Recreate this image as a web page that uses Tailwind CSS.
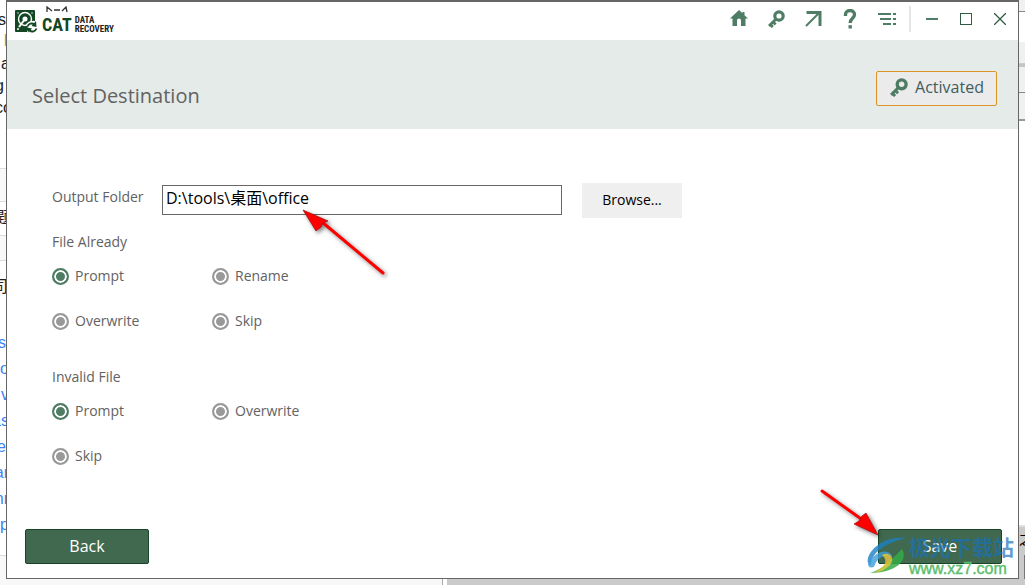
<!DOCTYPE html>
<html lang="en">
<head>
<meta charset="utf-8">
<meta name="viewport" content="width=device-width, initial-scale=1">
<title>CAT Data Recovery</title>
<script src="https://cdn.jsdelivr.net/npm/@tailwindcss/browser@4"></script>
</head>
<body class="relative flex h-screen flex-col overflow-hidden bg-white font-['Open_Sans','Noto_Sans_CJK_SC',sans-serif] font-normal text-[#626262]">
<svg class="hidden" aria-hidden="true">
  <symbol id="key" viewBox="0 0 18 18"><circle cx="12" cy="6" r="4.2" fill="none" stroke="currentColor" stroke-width="3.2"/><path d="M8.500 9.500 2 16M3.200 14.500l2.600 2.600M6 11.800l2.600 2.600" fill="none" stroke="currentColor" stroke-width="2.800"/></symbol>
</svg>
<div class="flex min-h-0 flex-1">
  <!-- Page visible behind the window, left edge -->
  <div class="relative w-[6px] shrink-0 overflow-hidden bg-white font-['Liberation_Sans','Noto_Sans_CJK_SC',sans-serif] text-base text-[#222]" aria-hidden="true">
    <div class="absolute inset-x-0 top-[168px] h-[34px] border-y border-[#ddd] bg-[#f8f8f8]"></div>
    <div class="absolute inset-x-0 top-[235px] h-[26px] border-y border-[#ddd] bg-[#f8f8f8]"></div>
    <div class="absolute inset-x-0 top-[555px] bottom-0 border-t border-[#ddd] bg-[#f8f8f8]"></div>
    <span class="absolute right-0 top-[8px]">s</span>
    <span class="absolute left-[4px] top-[29px] text-[#d28a28]">l</span>
    <span class="absolute left-[1px] top-[52px]">a</span>
    <span class="absolute right-[2px] top-[74px]">g</span>
    <span class="absolute right-[-6px] top-[96px]">co</span>
    <span class="absolute right-[5px] top-[127px]">.</span>
    <span class="absolute right-[-6px] top-[206px]">题</span>
    <span class="absolute right-[-2px] top-[275px]">司</span>
    <div class="absolute right-[-3px] top-[330px] flex flex-col items-end text-base leading-[26px] text-[#3b82f6]">
      <span class="pr-[3px]">s</span><span>o</span><span>v</span><span>as</span><span class="pr-[3px]">e</span><span>ar</span><span>nr</span><span>p</span>
    </div>
  </div>

  <main class="flex min-w-0 flex-1 flex-col border border-[#666] border-t-2 bg-white">
    <header class="flex h-[38px] shrink-0 items-center justify-between pr-2 pl-2">
      <div class="flex items-center gap-[4px]">
        <svg class="h-[25px] w-[23px]" viewBox="0 0 23 25" fill="none" aria-hidden="true">
          <path fill="#134724" fill-rule="evenodd" d="M1 1h18a1 1 0 0 1 1 1v10a6 6 0 0 0-7 8v3H1a1 1 0 0 1-1-1V2a1 1 0 0 1 1-1Z"/>
          <circle cx="10" cy="10" r="6.500" stroke="#fff" stroke-width="1.400"/>
          <circle cx="10" cy="10" r="2.500" fill="#fff"/>
          <path d="m10 10-6 8" stroke="#fff" stroke-width="2"/>
          <circle cx="3" cy="4" r=".7" fill="#fff"/><circle cx="17" cy="4" r=".7" fill="#fff"/><circle cx="3" cy="20" r="1" fill="#fff"/>
          <path d="M12.500 17a4.500 4.500 0 0 1 7.500-1.500M21.500 19a4.500 4.500 0 0 1-8 2" stroke="#fff" stroke-width="4"/>
          <path d="M12.500 17.500a4.500 4.500 0 0 1 7-2M21.500 19.500a4.500 4.500 0 0 1-7 2" stroke="#134724" stroke-width="1.800"/>
          <path d="m21 12 .5 6-5-1ZM12 18.500l5 1-3.500 4Z" fill="#134724"/>
        </svg>
        <div class="relative flex items-center gap-[3px] pt-[8px]">
          <svg class="absolute top-0 left-[4px] h-[7px] w-[22px]" viewBox="0 0 22 7" fill="none" stroke="#333" stroke-width="1.300" aria-hidden="true"><path d="M1 6V1l5 4M16 5l4-4 1 5M8 4h6"/></svg>
          <span class="font-['Roboto_Condensed','Open_Sans_Condensed','Liberation_Sans',sans-serif] text-[18px] leading-[22px] font-bold text-[#134724]">CAT</span>
          <span class="font-['Roboto_Condensed','Open_Sans_Condensed','Liberation_Sans',sans-serif] text-[9px] leading-[9px] font-bold text-[#222]">DATA<br>RECOVERY</span>
        </div>
      </div>
      <nav class="flex items-center pb-1 text-[#4f7c64]" aria-label="Window">
        <div class="flex items-center gap-[17px]">
          <button aria-label="Home" class="grid size-5 place-items-center"><svg class="h-[18px] w-[18px]" viewBox="0 0 18 18" fill="currentColor"><path d="M9 0 0 8.500h2.500V16H7v-5.500a2 2 0 0 1 4 0V16h4.500V8.500H18L14.500 5.200V2h-2v1.300Z"/></svg></button>
          <button aria-label="License" class="grid size-5 place-items-center"><svg class="size-[18px]"><use href="#key"/></svg></button>
          <button aria-label="Open" class="grid size-5 place-items-center"><svg class="size-[18px]" viewBox="0 0 18 18" fill="none" stroke="currentColor" stroke-width="3"><path d="M2.500 2.500h13.500V16"/><path d="M15.500 2.500 2 16" stroke-width="2"/></svg></button>
          <button aria-label="Help" class="grid size-5 place-items-center"><svg class="h-[20px] w-[14px]" viewBox="0 0 14 20" fill="none" stroke="currentColor" stroke-width="3.400"><path d="M2.500 7V5.500a4.300 3.800 0 0 1 9 0c0 4-4.300 3.500-4.300 8.500"/><path d="M7.200 16.200v3.300"/></svg></button>
          <button aria-label="Menu" class="grid size-5 place-items-center"><svg class="h-[14px] w-[20px]" viewBox="0 0 20 14" fill="none" stroke="currentColor" stroke-width="2"><path d="M1 2h13M3 7h11M6 12h8M16 2h3M16 7h3M16 12h3"/></svg></button>
        </div>
        <div class="mr-[11px] ml-[12px] h-[26px] w-[2px] bg-[#e4e6e6]"></div>
        <div class="flex items-center gap-[14px]">
          <button aria-label="Minimize" class="grid size-5 place-items-center"><svg class="size-[14px]" viewBox="0 0 14 14" fill="none" stroke="currentColor" stroke-width="2"><path d="M1 7h12"/></svg></button>
          <button aria-label="Maximize" class="grid size-5 place-items-center"><span class="size-[12px] border border-[#2f5c42]"></span></button>
          <button aria-label="Close" class="grid size-5 place-items-center text-[#2f5c42]"><svg class="size-[12px]" viewBox="0 0 12 12" fill="none" stroke="currentColor" stroke-width="1.300"><path d="m0 0 12 12M12 0 0 12"/></svg></button>
        </div>
      </nav>
    </header>

    <section class="flex h-[89px] shrink-0 items-start justify-between bg-[#e5ebe8] pr-[21px] pl-[25px]">
      <h1 class="mt-[41px] text-xl leading-[30px]">Select Destination</h1>
      <button class="mt-[31px] flex h-[35px] w-[121px] items-center justify-center gap-[7px] rounded-xs border border-[#dd9426] bg-[#ebebeb] pb-[3px] text-base text-[#3e5c5d]">
        <svg class="size-[19px] text-[#4f7c64]" aria-hidden="true"><use href="#key"/></svg>Activated
      </button>
    </section>

    <form class="flex flex-1 flex-col pt-[54px] text-[14px]">
      <div class="flex items-start pl-[45px]">
        <label for="output" class="w-[110px] leading-7">Output Folder</label>
        <input id="output" type="text" value="D:\tools\桌面\office" class="mt-[2px] h-[30px] w-[400px] border border-[#666] px-[3px] pb-[7px] text-base text-black outline-none">
        <button type="button" class="ml-5 h-[35px] w-[100px] bg-[#efefef] pb-[2px] text-black">Browse...</button>
      </div>
      <fieldset class="mt-[12px] pl-[45px]">
        <legend class="h-6 leading-6">File Already</legend>
        <div class="grid grid-cols-[160px_160px] auto-rows-[45px]">
          <label class="flex items-center gap-[6px] pb-[2px]"><input type="radio" name="existing" checked class="mt-[2px] size-[17px] appearance-none rounded-full border-2 border-[#999] bg-[#999] shadow-[inset_0_0_0_2px_white] checked:border-[#4f7c64] checked:bg-[#4f7c64]">Prompt</label>
          <label class="flex items-center gap-[6px] pb-[2px]"><input type="radio" name="existing" class="mt-[2px] size-[17px] appearance-none rounded-full border-2 border-[#999] bg-[#999] shadow-[inset_0_0_0_2px_white] checked:border-[#4f7c64] checked:bg-[#4f7c64]">Rename</label>
          <label class="flex items-center gap-[6px] pb-[2px]"><input type="radio" name="existing" class="mt-[2px] size-[17px] appearance-none rounded-full border-2 border-[#999] bg-[#999] shadow-[inset_0_0_0_2px_white] checked:border-[#4f7c64] checked:bg-[#4f7c64]">Overwrite</label>
          <label class="flex items-center gap-[6px] pb-[2px]"><input type="radio" name="existing" class="mt-[2px] size-[17px] appearance-none rounded-full border-2 border-[#999] bg-[#999] shadow-[inset_0_0_0_2px_white] checked:border-[#4f7c64] checked:bg-[#4f7c64]">Skip</label>
        </div>
      </fieldset>
      <fieldset class="mt-[21px] pl-[45px]">
        <legend class="h-6 leading-6">Invalid File</legend>
        <div class="grid grid-cols-[160px_160px] auto-rows-[45px]">
          <label class="flex items-center gap-[6px] pb-[2px]"><input type="radio" name="invalid" checked class="mt-[2px] size-[17px] appearance-none rounded-full border-2 border-[#999] bg-[#999] shadow-[inset_0_0_0_2px_white] checked:border-[#4f7c64] checked:bg-[#4f7c64]">Prompt</label>
          <label class="flex items-center gap-[6px] pb-[2px]"><input type="radio" name="invalid" class="mt-[2px] size-[17px] appearance-none rounded-full border-2 border-[#999] bg-[#999] shadow-[inset_0_0_0_2px_white] checked:border-[#4f7c64] checked:bg-[#4f7c64]">Overwrite</label>
          <label class="flex items-center gap-[6px] pb-[2px]"><input type="radio" name="invalid" class="mt-[2px] size-[17px] appearance-none rounded-full border-2 border-[#999] bg-[#999] shadow-[inset_0_0_0_2px_white] checked:border-[#4f7c64] checked:bg-[#4f7c64]">Skip</label>
        </div>
      </fieldset>
      <div class="mt-auto flex justify-between pr-4 pb-[14px] pl-[18px]">
        <button type="button" class="h-[35px] w-[124px] rounded-xs border border-[#184528] bg-[#40694f] pb-[2px] text-base text-white">Back</button>
        <button type="submit" class="h-[35px] w-[124px] rounded-xs border border-[#184528] bg-[#40694f] pb-[2px] text-base text-white">Save</button>
      </div>
    </form>
  </main>

  <!-- Page visible behind the window, right edge -->
  <div class="flex w-[6px] shrink-0 flex-col overflow-hidden bg-white" aria-hidden="true">
    <div class="h-[12px] border-b border-[#888] bg-[#f0f0f0]"></div>
    <div class="h-[30px]"></div>
    <div class="h-[22px] border-b border-[#ccc] bg-[#f0f0f0]"></div>
    <div class="h-[3px] bg-[#c4c4c4]"></div>
    <div class="h-[26px] border-b border-[#888] bg-[#f0f0f0]"></div>
    <div class="h-[28px] border-b-2 border-[#999] bg-[#f0f0f0]"></div>
    <div class="mt-auto h-[54px] border-t-2 border-[#e0e0e0] bg-[#cacaca] font-['Noto_Sans_CJK_SC',sans-serif] text-sm leading-[22px] text-black">之<div class="mt-[6px] ml-[5px] h-6 bg-[#777]"></div></div>
  </div>
</div>
<div class="flex h-[6px] shrink-0" aria-hidden="true">
  <div class="w-[443px] border-r border-[#aaa] bg-[#f8f8f8]"></div>
  <div class="w-[4px] bg-white"></div>
  <div class="flex-1 bg-[#cacaca]"></div>
</div>

<!-- Annotation arrows -->
<svg class="pointer-events-none absolute top-[205px] left-[300px] h-[76px] w-[92px] drop-shadow-[2px_2px_2px_rgba(0,0,0,0.500)]" viewBox="0 0 92 76" aria-hidden="true"><path d="M22 17 83 68" stroke="#f00" stroke-width="3" stroke-linecap="round"/><path d="m3 5 25 11-5 2-2 4-5 4Z" fill="#f00" stroke="#a01010" stroke-width=".7"/></svg>
<svg class="pointer-events-none absolute right-[140px] bottom-[45px] h-[56px] w-[68px] drop-shadow-[2px_2px_2px_rgba(0,0,0,0.500)]" viewBox="0 0 68 56" aria-hidden="true"><path d="m5 7 42 30" stroke="#f00" stroke-width="3" stroke-linecap="round"/><path d="M61 51 37 40l5-3 3-5 4-3Z" fill="#f00" stroke="#a01010" stroke-width=".7"/></svg>

<!-- Download site watermark -->
<div class="pointer-events-none absolute right-[11px] bottom-[8px] flex items-end">
  <svg class="h-[42px] w-[44px]" viewBox="0 0 44 42" aria-hidden="true">
    <path d="M41 3C24 1 7 10 3 23c-1 4 0 6 3 7 0-12 14-22 35-27Z" fill="#1c7fc4" opacity=".8"/>
    <path d="M3 29c8-14 20-16 25-7-7-4-16 0-19 10-4 1-6 0-6-3Z" fill="#3c9dd8" opacity=".8"/>
    <path d="M5 38c14-4 21-13 32-24 7 12-7 24-32 24Z" fill="#35ad45" opacity=".85"/>
    <path d="M17 20c7-4 14 3 8 10-4 4-9 7-16 8 11-7 15-12 8-18Z" fill="#e9c83c" opacity=".8"/>
  </svg>
  <div>
    <div class="font-['Noto_Sans_CJK_SC',sans-serif] text-[21px] leading-[28px] font-bold text-[#1871b8]/70">极光下载站</div>
    <div class="font-['Liberation_Sans',sans-serif] text-base leading-[17px] font-normal text-[#5cbd6c] [-webkit-text-stroke:0.4px_#5cbd6c]">www.xz7.com</div>
  </div>
</div>
</body>
</html>
